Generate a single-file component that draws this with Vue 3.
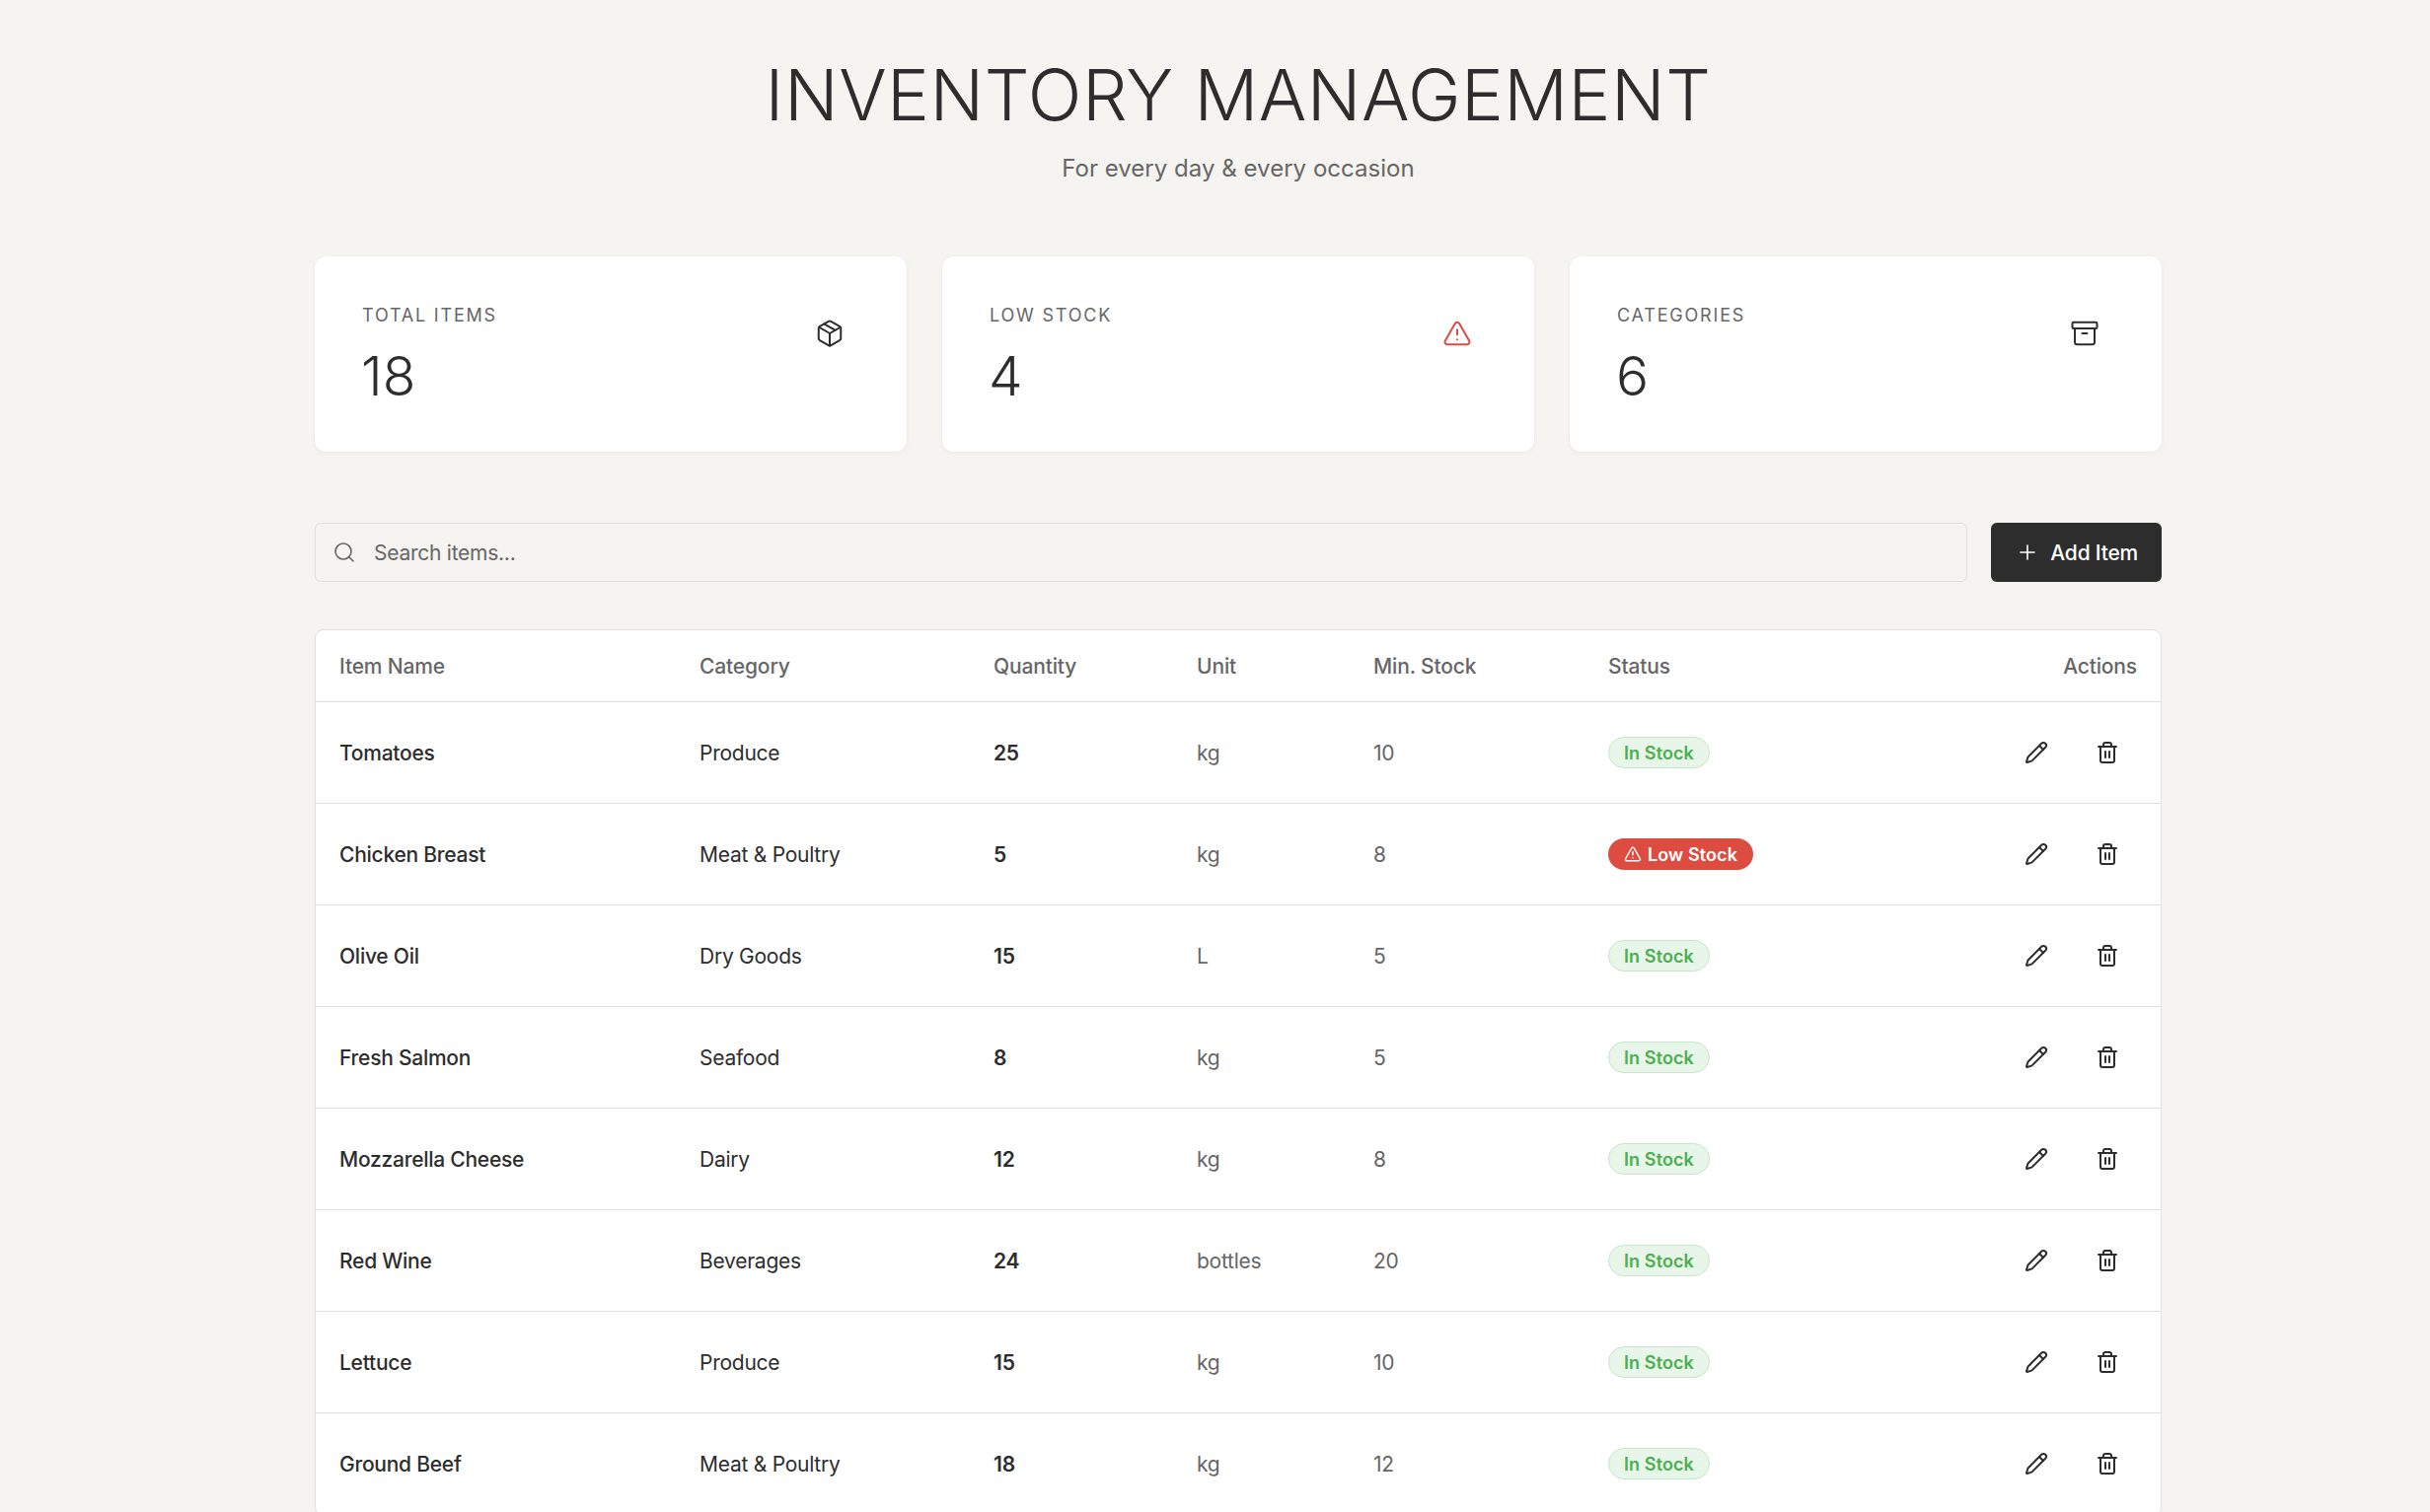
<script setup>
const stats = [
  { label: 'TOTAL ITEMS', value: 18, icon: 'package' },
  { label: 'LOW STOCK', value: 4, icon: 'alert' },
  { label: 'CATEGORIES', value: 6, icon: 'archive' },
]
const items = [
  ['Tomatoes', 'Produce', 25, 'kg', 10, false],
  ['Chicken Breast', 'Meat & Poultry', 5, 'kg', 8, true],
  ['Olive Oil', 'Dry Goods', 15, 'L', 5, false],
  ['Fresh Salmon', 'Seafood', 8, 'kg', 5, false],
  ['Mozzarella Cheese', 'Dairy', 12, 'kg', 8, false],
  ['Red Wine', 'Beverages', 24, 'bottles', 20, false],
  ['Lettuce', 'Produce', 15, 'kg', 10, false],
  ['Ground Beef', 'Meat & Poultry', 18, 'kg', 12, false],
]
</script>

<template>
  <div class="page">
    <header class="head">
      <h1>INVENTORY MANAGEMENT</h1>
      <p>For every day &amp; every occasion</p>
    </header>

    <section class="stats">
      <div v-for="s in stats" :key="s.label" class="card">
        <div>
          <div class="label">{{ s.label }}</div>
          <div class="value">{{ s.value }}</div>
        </div>
        <div class="card-icon" :class="{ red: s.icon === 'alert' }">
          <svg viewBox="0 0 24 24" class="ico30">
            <template v-if="s.icon === 'package'">
              <path d="m7.5 4.27 9 5.15" />
              <path d="M21 8a2 2 0 0 0-1-1.73l-7-4a2 2 0 0 0-2 0l-7 4A2 2 0 0 0 3 8v8a2 2 0 0 0 1 1.73l7 4a2 2 0 0 0 2 0l7-4A2 2 0 0 0 21 16Z" />
              <path d="m3.3 7 8.7 5 8.7-5" />
              <path d="M12 22V12" />
            </template>
            <template v-else-if="s.icon === 'alert'">
              <path d="m21.73 18-8-14a2 2 0 0 0-3.48 0l-8 14A2 2 0 0 0 4 21h16a2 2 0 0 0 1.73-3" />
              <path d="M12 9v4" />
              <path d="M12 17h.01" />
            </template>
            <template v-else>
              <rect width="20" height="5" x="2" y="3" rx="1" />
              <path d="M4 8v11a2 2 0 0 0 2 2h12a2 2 0 0 0 2-2V8" />
              <path d="M10 12h4" />
            </template>
          </svg>
        </div>
      </div>
    </section>

    <section class="toolbar">
      <label class="search">
        <svg viewBox="0 0 24 24" class="ico24 muted">
          <circle cx="11" cy="11" r="8" />
          <path d="m21 21-4.3-4.3" />
        </svg>
        <input type="text" placeholder="Search items..." />
      </label>
      <button class="add">
        <svg viewBox="0 0 24 24" class="ico24">
          <path d="M5 12h14" />
          <path d="M12 5v14" />
        </svg>
        <span>Add Item</span>
      </button>
    </section>

    <div class="table-wrap">
      <table>
        <colgroup>
          <col class="c1" /><col class="c2" /><col class="c3" /><col class="c4" /><col class="c5" /><col class="c6" /><col />
        </colgroup>
        <thead>
          <tr>
            <th>Item Name</th>
            <th>Category</th>
            <th>Quantity</th>
            <th>Unit</th>
            <th>Min. Stock</th>
            <th>Status</th>
            <th class="right">Actions</th>
          </tr>
        </thead>
        <tbody>
          <tr v-for="row in items" :key="row[0]">
            <td class="name">{{ row[0] }}</td>
            <td>{{ row[1] }}</td>
            <td class="qty">{{ row[2] }}</td>
            <td class="soft">{{ row[3] }}</td>
            <td class="soft">{{ row[4] }}</td>
            <td>
              <span v-if="row[5]" class="badge low">
                <svg viewBox="0 0 24 24" class="ico18">
                  <path d="m21.73 18-8-14a2 2 0 0 0-3.48 0l-8 14A2 2 0 0 0 4 21h16a2 2 0 0 0 1.73-3" />
                  <path d="M12 9v4" />
                  <path d="M12 17h.01" />
                </svg>
                Low Stock
              </span>
              <span v-else class="badge ok">In Stock</span>
            </td>
            <td>
              <div class="actions">
                <button class="icon-btn" aria-label="Edit">
                  <svg viewBox="0 0 24 24" class="ico24 thick">
                    <path d="M21.174 6.812a1 1 0 0 0-3.986-3.987L3.842 16.174a2 2 0 0 0-.5.83l-1.321 4.352a.5.5 0 0 0 .623.622l4.353-1.32a2 2 0 0 0 .83-.497z" />
                    <path d="m15 5 4 4" />
                  </svg>
                </button>
                <button class="icon-btn" aria-label="Delete">
                  <svg viewBox="0 0 24 24" class="ico24 thick">
                    <path d="M3 6h18" />
                    <path d="M19 6v14c0 1-1 2-2 2H7c-1 0-2-1-2-2V6" />
                    <path d="M8 6V4c0-1 1-2 2-2h4c1 0 2 1 2 2v2" />
                    <path d="M10 11v6" />
                    <path d="M14 11v6" />
                  </svg>
                </button>
              </div>
            </td>
          </tr>
        </tbody>
      </table>
    </div>
  </div>
</template>

<style>
html, body { margin: 0; background: #f5f4f0; overflow: hidden; }
</style>

<style scoped>
.page {
  box-sizing: border-box;
  height: 1533px;
  overflow: hidden;
  padding: 0 272px 0 319px;
  background: #f5f4f0;
  color: #2d2d2d;
  font-family: Inter, "Liberation Sans", sans-serif;
}
.head { text-align: center; padding-top: 48px; margin-bottom: 71px; }
h1 {
  margin: 0;
  font-size: 72px;
  line-height: 96px;
  font-weight: 300;
  letter-spacing: 0.5px;
}
.head p {
  margin: 9px 0 0;
  font-size: 24px;
  line-height: 36px;
  color: #666;
  letter-spacing: 0.03px;
}
.stats { display: grid; grid-template-columns: repeat(3, 1fr); gap: 36px; margin-bottom: 72px; }
.card {
  box-sizing: border-box;
  height: 198px;
  padding: 49px 48px 47px;
  background: #fff;
  border-radius: 12px;
  box-shadow: 0 1px 4px rgba(0, 0, 0, 0.06);
  display: flex;
  justify-content: space-between;
  align-items: flex-start;
}
.label { font-size: 18px; line-height: 22px; color: #666; letter-spacing: 1.8px; }
.value { font-size: 55px; line-height: 66px; font-weight: 300; margin-top: 17px; margin-left: -1px; }
.card-icon { width: 60px; height: 60px; margin-top: -1px; display: flex; align-items: center; justify-content: center; }
.card-icon.red { color: #dc4c41; }
svg { fill: none; stroke: currentColor; stroke-linecap: round; stroke-linejoin: round; display: block; flex: none; }
.ico30 { width: 30px; height: 30px; stroke-width: 1.6; }
.ico24 { width: 24px; height: 24px; stroke-width: 1.6; }
.ico24.thick { stroke-width: 2; }
.ico18 { width: 18px; height: 18px; stroke-width: 2; }
.muted { color: #666; }
.toolbar { display: flex; gap: 24px; margin-bottom: 48px; height: 60px; }
.search {
  flex: 1;
  display: flex;
  align-items: center;
  gap: 18px;
  padding: 0 0 0 17px;
  border: 1px solid #e0dfdb;
  border-radius: 6px;
}
.search input {
  flex: 1;
  border: 0;
  outline: 0;
  background: transparent;
  font: inherit;
  font-size: 21px;
  letter-spacing: -0.25px;
  color: #2d2d2d;
  padding: 0;
}
.search input::placeholder { color: #666; opacity: 1; }
.add {
  display: flex;
  align-items: center;
  gap: 11px;
  padding: 0 24px 0 25px;
  border: 0;
  border-radius: 6px;
  background: #2d2d2d;
  color: #fff;
  font: inherit;
  font-size: 21px;
  font-weight: 500;
  letter-spacing: -0.2px;
}
.table-wrap {
  background: #fff;
  border: 1px solid #e0e0e0;
  border-radius: 9px;
  overflow: hidden;
}
table { width: 100%; table-layout: fixed; border-collapse: separate; border-spacing: 0; font-size: 21px; letter-spacing: -0.25px; }
.c1 { width: 365px; }
.c2 { width: 298px; }
.c3 { width: 206px; }
.c4 { width: 179px; }
.c5 { width: 238px; }
.c6 { width: 384px; }
th {
  height: 73px;
  box-sizing: border-box;
  padding: 0 0 0 24px;
  text-align: left;
  font-weight: 500;
  color: #666;
  letter-spacing: -0.15px;
  border-bottom: 1px solid #e0e0e0;
}
th.right { text-align: right; padding-right: 24px; }
td {
  height: 103px;
  box-sizing: border-box;
  padding: 0 0 0 24px;
  border-bottom: 1px solid #e0e0e0;
}
.name { font-weight: 500; }
.qty { font-weight: 600; }
.soft { color: #666; }
.badge {
  display: inline-flex;
  align-items: center;
  gap: 6px;
  box-sizing: border-box;
  height: 32px;
  padding: 0 16px;
  border-radius: 16px;
  font-size: 18px;
  font-weight: 600;
  letter-spacing: 0.1px;
  vertical-align: middle;
}
.badge.ok { background: #e8f5e9; color: #4caf50; border: 1px solid #c8e6c9; padding: 0 15px; }
.badge.low { background: #dc4c41; color: #fff; }
.actions { display: flex; justify-content: flex-end; gap: 12px; padding-right: 24px; }
.icon-btn {
  width: 60px;
  height: 60px;
  padding: 0;
  border: 0;
  background: transparent;
  color: #2d2d2d;
  display: flex;
  align-items: center;
  justify-content: center;
}
</style>
